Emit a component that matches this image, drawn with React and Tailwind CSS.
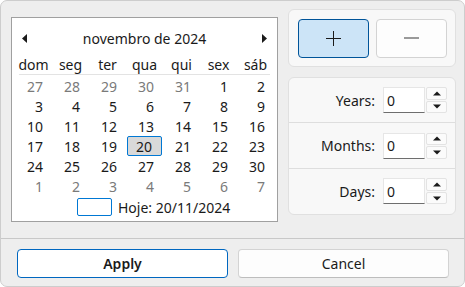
import React from "react";

const weeks = [
  [[27, true], [28, true], [29, true], [30, true], [31, true], [1], [2]],
  [[3], [4], [5], [6], [7], [8], [9]],
  [[10], [11], [12], [13], [14], [15], [16]],
  [[17], [18], [19], [20], [21], [22], [23]],
  [[24], [25], [26], [27], [28], [29], [30]],
  [[1, true], [2, true], [3, true], [4, true], [5, true], [6, true], [7, true]],
];

const dayNames = ["dom", "seg", "ter", "qua", "qui", "sex", "sáb"];

function Spinner() {
  return (
    <div className="flex flex-col w-[21px] h-[26px] gap-px ml-px">
      <div className="flex-1 flex items-center justify-center bg-[#fbfbfb] border border-[#e3e3e3] rounded-[2px]">
        <svg width="8" height="5" viewBox="0 0 8 5">
          <path d="M0 4.5 L4 0.5 L8 4.5 Z" fill="#1a1a1a" />
        </svg>
      </div>
      <div className="flex-1 flex items-center justify-center bg-[#fbfbfb] border border-[#e3e3e3] rounded-[2px]">
        <svg width="8" height="5" viewBox="0 0 8 5">
          <path d="M0 0.5 L8 0.5 L4 4.5 Z" fill="#1a1a1a" />
        </svg>
      </div>
    </div>
  );
}

function Field({ label, last }) {
  return (
    <div
      className={`h-[46px] flex items-center justify-end pr-[8px] ${
        last ? "" : "border-b border-[#dedede]"
      }`}
    >
      <span className="mr-[8px]">{label}</span>
      <div className="w-[42px] h-[26px] bg-white border border-[#e6e6e6] border-b-[#6e6e6e] flex items-center pl-[3px]">
        0
      </div>
      <Spinner />
    </div>
  );
}

export default function App() {
  return (
    <div
      className="w-[465px] h-[287px] bg-[#eeeeee] border border-[#cdcdcd] rounded-[7px] overflow-hidden flex flex-col text-[14px] text-[#1a1a1a]"
      style={{ fontFamily: '"Noto Sans", "Segoe UI", sans-serif' }}
    >
      <div className="h-[237px] flex items-start pl-[10px] pt-[8px] gap-[10px]">
        {/* calendar */}
        <div className="mt-[8px] w-[267px] h-[205px] bg-white border border-[#a0a0a0] flex flex-col">
          <div className="h-[30px] mt-[5px] flex items-center justify-between px-[10px]">
            <svg width="5" height="9" viewBox="0 0 5 9">
              <path d="M5 0 L0 4.5 L5 9 Z" fill="#1a1a1a" />
            </svg>
            <span>novembro de 2024</span>
            <svg width="5" height="9" viewBox="0 0 5 9">
              <path d="M0 0 L5 4.5 L0 9 Z" fill="#1a1a1a" />
            </svg>
          </div>
          <div className="grid grid-cols-[repeat(7,37px)] pl-[3px] h-[18px] mt-[3px] items-center">
            {dayNames.map((d) => (
              <div key={d} className="text-center leading-none">
                {d}
              </div>
            ))}
          </div>
          <div className="h-px bg-[#e3e3e3] mx-[7px]" />
          <div className="grid grid-cols-[repeat(7,37px)] pl-[3px] mt-px">
            {weeks.flat().map(([n, dim], i) => {
              const sel = n === 20 && !dim;
              return (
                <div
                  key={i}
                  className={`h-[20px] flex items-center justify-end pr-[9px] ${
                    dim ? "text-[#7a7a7a]" : ""
                  } ${
                    sel
                      ? "bg-[#d9d9d9] border border-[#0078d4] rounded-[2px] mx-px pr-[8px]"
                      : ""
                  }`}
                >
                  {n}
                </div>
              );
            })}
          </div>
          <div className="flex items-center pl-[65px] mt-px h-[20px]">
            <div className="w-[35px] h-[18px] border border-[#0078d4] rounded-[2px]" />
            <span className="ml-[6px]">Hoje: 20/11/2024</span>
          </div>
        </div>

        {/* right side */}
        <div className="flex flex-col gap-[10px] w-[168px]">
          <div className="h-[58px] bg-[#f8f8f8] border border-[#e0e0e0] rounded-[6px] flex items-center pl-[9px] gap-[7px]">
            <div className="w-[71px] h-[39px] bg-[#cce4f7] border border-[#005499] rounded-[4px] flex items-center justify-center">
              <svg width="15" height="15" viewBox="0 0 15 15">
                <path d="M7.5 0 V15 M0 7.5 H15" stroke="#1a1a1a" strokeWidth="1" />
              </svg>
            </div>
            <div className="w-[71px] h-[39px] bg-[#fdfdfd] border border-[#d3d3d3] rounded-[4px] flex items-center justify-center">
              <svg width="15" height="2" viewBox="0 0 15 2">
                <path d="M0 1 H15" stroke="#9a9a9a" strokeWidth="2" />
              </svg>
            </div>
          </div>
          <div className="h-[138px] bg-[#f8f8f8] border border-[#e0e0e0] rounded-[6px] flex flex-col">
            <Field label="Years:" />
            <Field label="Months:" />
            <Field label="Days:" last />
          </div>
        </div>
      </div>

      <div className="h-px bg-[#c8c8c8]" />

      <div className="flex-1 flex items-start pt-[10px] pl-[16px] gap-[10px]">
        <button className="w-[211px] h-[29px] bg-white border border-[#0067c0] rounded-[4px] font-semibold">
          Apply
        </button>
        <button className="w-[211px] h-[29px] bg-[#fdfdfd] border border-[#d3d3d3] border-b-[#bdbdbd] rounded-[4px]">
          Cancel
        </button>
      </div>
    </div>
  );
}
